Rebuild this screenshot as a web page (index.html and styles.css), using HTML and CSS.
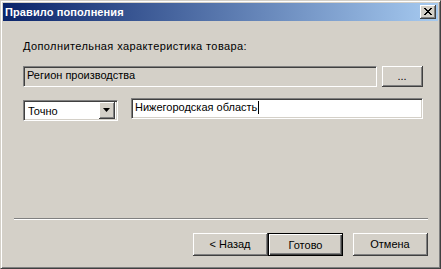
FILE: index.html
```html
<!DOCTYPE html>
<html lang="ru">
<head>
    <meta charset="UTF-8">
    <title>Правило пополнения</title>
    <link rel="stylesheet" href="styles.css">
</head>
<body>
    <div class="window">
        <div class="titlebar">
            <span class="title">Правило пополнения</span>
            <div class="close">
                <svg width="8" height="7" viewBox="0 0 8 7">
                    <path d="M0 0h2v1h1v1h2v-1h1v-1h2v1h-1v1h-1v1h-1v1h1v1h1v1h1v1h-2v-1h-1v-1h-2v1h-1v1h-2v-1h1v-1h1v-1h1v-1h-1v-1h-1v-1h-1z" fill="#000"/>
                </svg>
            </div>
        </div>

        <div class="content">
            <div class="label">Дополнительная характеристика товара:</div>
            <div class="row">
                <div class="field readonly">Регион производства</div>
                <div class="btn small">...</div>
            </div>
            <div class="row second">
                <div class="combo">
                    <span class="combo-text">Точно</span>
                    <div class="combo-arrow">
                        <svg width="7" height="4" viewBox="0 0 7 4"><path d="M0 0h7l-3.5 4z" fill="#000"/></svg>
                    </div>
                </div>
                <div class="field edit">Нижегородская область<span class="caret"></span></div>
            </div>
        </div>

        <div class="footer">
            <div class="separator"></div>
            <div class="buttons">
                <div class="btn">&lt; Назад</div>
                <div class="btn default">Готово</div>
                <div class="btn cancel">Отмена</div>
            </div>
        </div>
    </div>
</body>
</html>
```

FILE: styles.css
```css
body {
    margin: 0;
    font-family: "Liberation Sans", Arial, sans-serif;
    font-size: 11px;
    color: #000;
    background-color: #d4d0c8;
}
.window {
    width: 441px;
    height: 269px;
    box-sizing: border-box;
    display: flex;
    flex-direction: column;
    background-color: #d4d0c8;
    border: 1px solid;
    border-color: #d4d0c8 #404040 #404040 #d4d0c8;
    box-shadow: inset 1px 1px 0 #fff, inset -1px -1px 0 #808080;
    padding: 2px;
}
.titlebar {
    height: 18px;
    display: flex;
    align-items: center;
    justify-content: space-between;
    padding: 0 2px 0 2px;
    background: linear-gradient(to right, #0a246a, #a6caf0);
}
.title {
    color: #fff;
    font-weight: bold;
    font-size: 11px;
    letter-spacing: 0.1px;
}
.close {
    width: 16px;
    height: 14px;
    box-sizing: border-box;
    display: flex;
    align-items: center;
    justify-content: center;
    background-color: #d4d0c8;
    border-right: 1px solid #404040;
    border-bottom: 1px solid #404040;
    box-shadow: inset 1px 1px 0 #fff, inset -1px -1px 0 #808080;
}
.content {
    flex: 1;
    padding: 19px 15px 0 20px;
}
.label {
    line-height: 13px;
    margin-bottom: 13px;
    letter-spacing: 0.4px;
}
.row {
    display: flex;
    align-items: flex-start;
}
.row.second {
    margin-top: 11px;
}
.field {
    height: 21px;
    box-sizing: border-box;
    line-height: 17px;
    padding: 0 3px;
    border: 1px solid;
    border-color: #808080 #fff #fff #808080;
    box-shadow: inset 1px 1px 0 #404040, inset -1px -1px 0 #d4d0c8;
}
.field.readonly {
    width: 354px;
    background-color: #d4d0c8;
}
.field.edit {
    width: 292px;
    margin-left: 13px;
    background-color: #fff;
    padding-left: 3px;
}
.caret {
    display: inline-block;
    width: 1px;
    height: 13px;
    background-color: #000;
    vertical-align: -3px;
    margin-left: 1px;
}
.btn {
    height: 23px;
    width: 75px;
    box-sizing: border-box;
    display: flex;
    align-items: center;
    justify-content: center;
    background-color: #d4d0c8;
    border-right: 1px solid #404040;
    border-bottom: 1px solid #404040;
    box-shadow: inset 1px 1px 0 #fff, inset -1px -1px 0 #808080;
}
.btn.small {
    width: 41px;
    height: 21px;
    margin-left: 5px;
}
.combo {
    width: 95px;
    height: 21px;
    margin-top: 2px;
    box-sizing: border-box;
    display: flex;
    align-items: center;
    justify-content: space-between;
    padding: 2px;
    background-color: #fff;
    border: 1px solid;
    border-color: #808080 #fff #fff #808080;
    box-shadow: inset 1px 1px 0 #404040, inset -1px -1px 0 #d4d0c8;
}
.combo-text {
    padding-left: 2px;
}
.combo-arrow {
    width: 16px;
    height: 17px;
    box-sizing: border-box;
    display: flex;
    align-items: center;
    justify-content: center;
    background-color: #d4d0c8;
    border-right: 1px solid #404040;
    border-bottom: 1px solid #404040;
    box-shadow: inset 1px 1px 0 #fff, inset -1px -1px 0 #808080;
}
.footer {
    padding: 0 10px 10px 11px;
}
.separator {
    border-top: 1px solid #808080;
    border-bottom: 1px solid #fff;
}
.buttons {
    display: flex;
    justify-content: flex-end;
    margin-top: 13px;
}
.btn.default {
    border: 1px solid #000;
    box-shadow: inset 1px 1px 0 #fff, inset -1px -1px 0 #404040, inset -2px -2px 0 #808080;
}
.btn.cancel {
    margin-left: 10px;
}
```
